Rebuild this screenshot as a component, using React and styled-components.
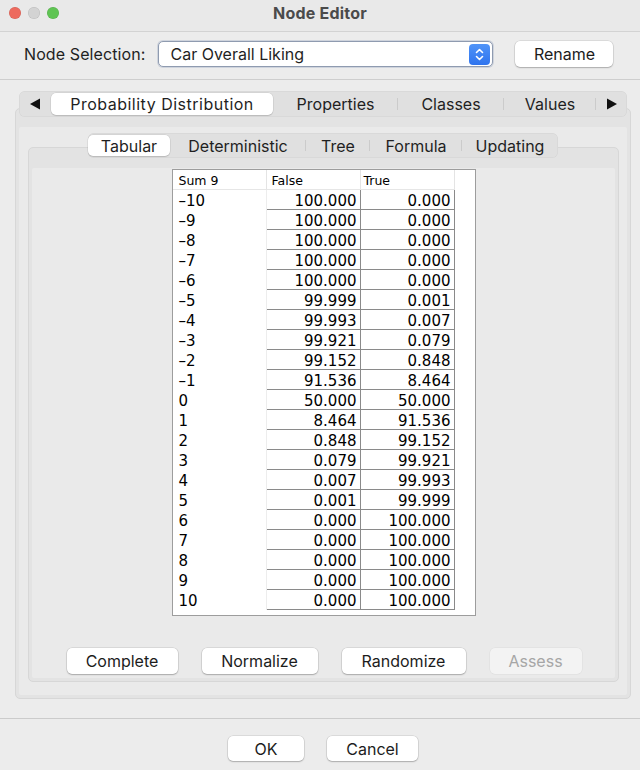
import React from 'react';
import styled, { createGlobalStyle } from 'styled-components';

const GlobalStyle = createGlobalStyle`
  html, body {
    margin: 0;
    padding: 0;
    background: #ececec;
  }
  * {
    box-sizing: border-box;
  }
`;

const Window = styled.div`
  width: 640px;
  height: 770px;
  background: #ececec;
  font-family: Inter, 'Noto Sans', sans-serif;
  color: #1f1f1f;
  display: flex;
  flex-direction: column;
  overflow: hidden;
`;

const TitleBar = styled.div`
  height: 32px;
  flex: none;
  display: flex;
  align-items: center;
  justify-content: center;
  position: relative;
  background: #e9e9e9;
  border-bottom: 1px solid #d3d3d3;
  padding-bottom: 6px;
`;

const Lights = styled.div`
  position: absolute;
  left: 9px;
  top: 7px;
  display: flex;
  gap: 7px;
`;

const Light = styled.span`
  width: 12px;
  height: 12px;
  border-radius: 50%;
  background: ${(p) => p.color};
  box-shadow: inset 0 0 0 0.5px rgba(0, 0, 0, 0.12);
`;

const Title = styled.div`
  font-size: 16px;
  font-weight: 700;
  color: #4b4b4b;
  letter-spacing: 0.2px;
`;

const Header = styled.div`
  height: 48px;
  flex: none;
  display: flex;
  align-items: center;
  padding: 0 0 3px 24px;
  border-bottom: 1px solid #cecece;
`;

const Label = styled.span`
  font-size: 16px;
  letter-spacing: 0.1px;
  margin-right: 13px;
`;

const Select = styled.div`
  width: 335px;
  height: 26px;
  display: flex;
  align-items: center;
  justify-content: space-between;
  background: #fff;
  border: 1px solid #8f9bb0;
  border-radius: 5px;
  padding: 0 2px 0 11px;
  font-size: 16px;
  margin-right: 22px;
  box-shadow: 0 0 0 1px rgba(120, 140, 175, 0.25);
`;

const Stepper = styled.span`
  width: 21px;
  height: 21px;
  border-radius: 4px;
  background: linear-gradient(#4f93f8, #2f74ee);
  display: flex;
  align-items: center;
  justify-content: center;
`;

const Button = styled.button`
  width: ${(p) => p.w}px;
  height: ${(p) => p.h || 26}px;
  border: none;
  border-radius: 5px;
  background: ${(p) => (p.disabled ? '#f3f3f3' : '#ffffff')};
  color: ${(p) => (p.disabled ? '#a6a6a6' : '#1c1c1c')};
  font-family: Inter, 'Noto Sans', sans-serif;
  font-size: 16px;
  padding: 0;
  box-shadow: ${(p) =>
    p.disabled
      ? '0 0 0 0.5px rgba(0,0,0,0.06)'
      : '0 0 0 0.5px rgba(0,0,0,0.14), 0 1px 1.5px rgba(0,0,0,0.22)'};
`;

const Main = styled.div`
  flex: 1;
  padding: 11px 9px 19px 15px;
  display: flex;
  flex-direction: column;
`;

const Strip = styled.div`
  height: ${(p) => p.h}px;
  margin: 0 ${(p) => p.mx}px ${(p) => -p.overlap}px;
  align-self: ${(p) => (p.center ? 'center' : 'stretch')};
  position: relative;
  z-index: 1;
  display: flex;
  align-items: center;
  background: #e0e0e0;
  border-radius: 6px;
  box-shadow: inset 0 0 0 0.5px rgba(0, 0, 0, 0.06);
  font-size: 16px;
`;

const Arrow = styled.span`
  width: ${(p) => p.w}px;
  height: 100%;
  display: flex;
  align-items: center;
  justify-content: center;
`;

const Tab = styled.span`
  width: ${(p) => p.w}px;
  height: ${(p) => p.h - 4}px;
  display: flex;
  align-items: center;
  justify-content: center;
  position: relative;
  border-radius: 5px;
  letter-spacing: ${(p) => p.ls || 0}px;
  background: ${(p) => (p.active ? '#ffffff' : 'transparent')};
  box-shadow: ${(p) =>
    p.active ? '0 0 0 0.5px rgba(0,0,0,0.1), 0 1px 1px rgba(0,0,0,0.12)' : 'none'};
  color: #1f1f1f;
  &::after {
    content: '';
    display: ${(p) => (p.sep ? 'block' : 'none')};
    position: absolute;
    right: 0;
    top: 5px;
    bottom: 5px;
    width: 1px;
    background: #cbcbcb;
  }
`;

const Panel = styled.div`
  flex: ${(p) => (p.grow ? 1 : 'none')};
  margin: 0 ${(p) => p.mr}px 0 ${(p) => p.ml}px;
  border: 1px solid #d7d7d7;
  border-radius: 5px;
  background: #e3e3e3;
  padding: ${(p) => p.top}px 3px 3px;
  display: flex;
  flex-direction: column;
`;

const PanelBody = styled.div`
  flex: 1;
  background: #eaeaea;
  border-radius: 2px;
  display: flex;
  flex-direction: column;
  padding: ${(p) => p.pad};
`;

const Table = styled.div`
  align-self: center;
  width: 304px;
  height: 447px;
  margin-top: 1px;
  background: #fff;
  border: 1px solid #9d9d9d;
  display: grid;
  grid-template-columns: 94px 94px 94px;
  grid-auto-rows: 20px;
  align-content: start;
  font-family: 'DejaVu Sans', sans-serif;
  color: #000;
`;

const HeadCell = styled.div`
  font-size: 12.5px;
  line-height: 19px;
  padding: 1px 0 0 ${(p) => p.pl}px;
  border-right: 1px solid #e4e4e4;
  border-bottom: 1px solid #e6e6e6;
`;

const RowLabel = styled.div`
  font-size: 15px;
  line-height: 19px;
  padding: 2px 0 0 6px;
  border-right: 1px solid #ededed;
`;

const Cell = styled.div`
  font-size: 15px;
  line-height: 19px;
  padding: 2px 3px 0 0;
  text-align: right;
  border-right: 1px solid #8a8a8a;
  border-bottom: 1px solid #8a8a8a;
`;

const ActionRow = styled.div`
  margin-top: 32px;
  display: flex;
  justify-content: center;
  gap: 24px;
  padding-left: 1px;
`;

const Footer = styled.div`
  height: 52px;
  flex: none;
  border-top: 1px solid #cbcbcb;
  display: flex;
  justify-content: center;
  gap: 23px;
  padding: 17px 0 0 6px;
`;

const data = [
  ['–10', '100.000', '0.000'],
  ['–9', '100.000', '0.000'],
  ['–8', '100.000', '0.000'],
  ['–7', '100.000', '0.000'],
  ['–6', '100.000', '0.000'],
  ['–5', '99.999', '0.001'],
  ['–4', '99.993', '0.007'],
  ['–3', '99.921', '0.079'],
  ['–2', '99.152', '0.848'],
  ['–1', '91.536', '8.464'],
  ['0', '50.000', '50.000'],
  ['1', '8.464', '91.536'],
  ['2', '0.848', '99.152'],
  ['3', '0.079', '99.921'],
  ['4', '0.007', '99.993'],
  ['5', '0.001', '99.999'],
  ['6', '0.000', '100.000'],
  ['7', '0.000', '100.000'],
  ['8', '0.000', '100.000'],
  ['9', '0.000', '100.000'],
  ['10', '0.000', '100.000'],
];

const Triangle = ({ dir }) => (
  <svg width="12" height="12" viewBox="0 0 12 12">
    <path d={dir === 'left' ? 'M1 6 L11 0.5 L11 11.5 Z' : 'M11 6 L1 0.5 L1 11.5 Z'} fill="#111" />
  </svg>
);

const Chevrons = () => (
  <svg width="11" height="15" viewBox="0 0 11 15" fill="none" stroke="#fff" strokeWidth="1.6" strokeLinecap="round" strokeLinejoin="round">
    <path d="M2.5 5.5 L5.5 2.5 L8.5 5.5" />
    <path d="M2.5 9.5 L5.5 12.5 L8.5 9.5" />
  </svg>
);

const topTabs = [
  { label: 'Probability Distribution', w: 222, active: true, ls: 0.5 },
  { label: 'Properties', w: 125, sep: true },
  { label: 'Classes', w: 106, sep: true },
  { label: 'Values', w: 92, sep: true },
];

const subTabs = [
  { label: 'Tabular', w: 82, active: true },
  { label: 'Deterministic', w: 136, sep: true },
  { label: 'Tree', w: 64, sep: true },
  { label: 'Formula', w: 92, sep: true },
  { label: 'Updating', w: 96 },
];

export default function App() {
  return (
    <Window>
      <GlobalStyle />
      <TitleBar>
        <Lights>
          <Light color="#ed6a5e" />
          <Light color="#d3d3d3" />
          <Light color="#5fc453" />
        </Lights>
        <Title>Node Editor</Title>
      </TitleBar>

      <Header>
        <Label>Node Selection:</Label>
        <Select>
          Car Overall Liking
          <Stepper>
            <Chevrons />
          </Stepper>
        </Select>
        <Button w={98}>Rename</Button>
      </Header>

      <Main>
        <Strip h={26} mx={4} overlap={9}>
          <Arrow w={32}>
            <Triangle dir="left" />
          </Arrow>
          {topTabs.map((t) => (
            <Tab key={t.label} w={t.w} h={26} active={t.active} sep={t.sep} ls={t.ls}>
              {t.label}
            </Tab>
          ))}
          <Arrow w={31}>
            <Triangle dir="right" />
          </Arrow>
        </Strip>
        <Panel grow top={18} ml={0} mr={0}>
          <PanelBody pad="6px 0 13px">
            <Strip h={25} mx={0} overlap={11} center>
              {subTabs.map((t) => (
                <Tab key={t.label} w={t.w} h={25} active={t.active} sep={t.sep}>
                  {t.label}
                </Tab>
              ))}
            </Strip>
            <Panel grow top={20} ml={9} mr={8}>
              <PanelBody pad="0 0 3px">
                <Table>
                  <HeadCell pl={6}>Sum 9</HeadCell>
                  <HeadCell pl={5}>False</HeadCell>
                  <HeadCell pl={3}>True</HeadCell>
                  {data.map(([k, f, t]) => (
                    <React.Fragment key={k}>
                      <RowLabel>{k}</RowLabel>
                      <Cell>{f}</Cell>
                      <Cell>{t}</Cell>
                    </React.Fragment>
                  ))}
                </Table>
                <ActionRow>
                  <Button w={111}>Complete</Button>
                  <Button w={116}>Normalize</Button>
                  <Button w={124}>Randomize</Button>
                  <Button w={92} disabled>
                    Assess
                  </Button>
                </ActionRow>
              </PanelBody>
            </Panel>
          </PanelBody>
        </Panel>
      </Main>

      <Footer>
        <Button w={76} h={25}>OK</Button>
        <Button w={91} h={25}>Cancel</Button>
      </Footer>
    </Window>
  );
}
